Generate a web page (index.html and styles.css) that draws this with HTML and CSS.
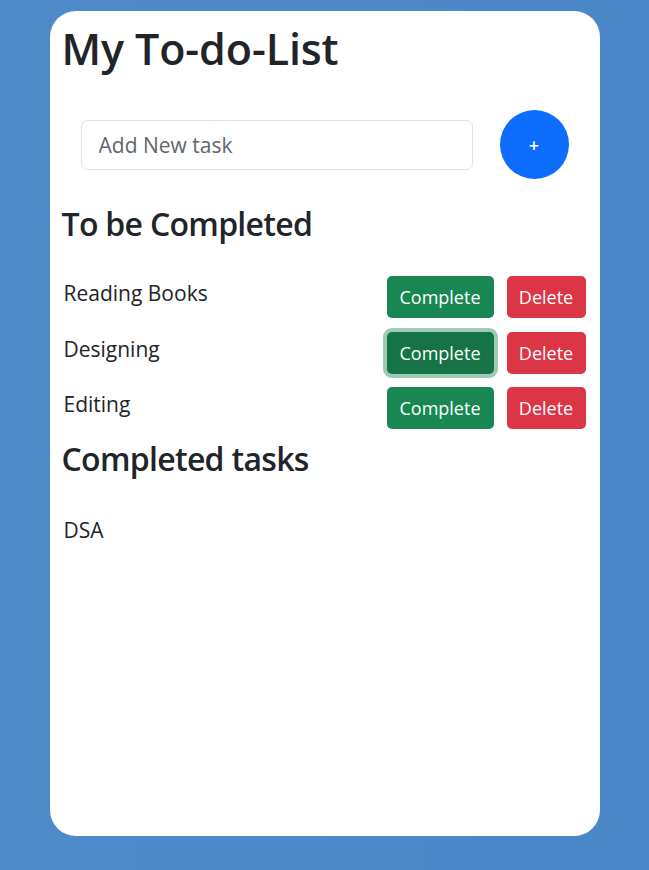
FILE: index.html
```html
<!DOCTYPE html>
<html lang="en">
<head>
<meta charset="utf-8">
<title>My To-do-List</title>
<link rel="stylesheet" href="styles.css">
</head>
<body>
<main class="card">
  <h1 class="title">My To-do-List</h1>
  <div class="add-row">
    <input class="task-input" type="text" placeholder="Add New task">
    <button class="add-btn" type="button">+</button>
  </div>
  <h2 class="section-title">To be Completed</h2>
  <ul class="task-list">
    <li class="task">
      <span class="task-name">Reading Books</span>
      <div class="actions">
        <button class="btn btn-complete" type="button">Complete</button>
        <button class="btn btn-delete" type="button">Delete</button>
      </div>
    </li>
    <li class="task">
      <span class="task-name">Designing</span>
      <div class="actions">
        <button class="btn btn-complete is-focused" type="button">Complete</button>
        <button class="btn btn-delete" type="button">Delete</button>
      </div>
    </li>
    <li class="task">
      <span class="task-name">Editing</span>
      <div class="actions">
        <button class="btn btn-complete" type="button">Complete</button>
        <button class="btn btn-delete" type="button">Delete</button>
      </div>
    </li>
  </ul>
  <h2 class="section-title section-done">Completed tasks</h2>
  <ul class="task-list done-list">
    <li class="task">
      <span class="task-name">DSA</span>
    </li>
  </ul>
</main>
</body>
</html>
```

FILE: styles.css
```css
* { box-sizing: border-box; }

html, body {
  margin: 0;
  padding: 0;
}

body {
  background: linear-gradient(90deg, #4f8bca 0%, #4b87c8 100%);
  min-height: 870px;
  font-family: "Open Sans", "Noto Sans", sans-serif;
  color: #212529;
  padding-top: 11px;
}

.card {
  width: 550px;
  height: 825px;
  margin: 0 auto;
  background: #fff;
  border-radius: 26px;
  padding: 11.5px 12px 10px;
}

.title {
  margin: 0;
  font-size: 43px;
  font-weight: 600;
  letter-spacing: -0.1px;
  line-height: 1.2;
}

.add-row {
  display: flex;
  align-items: center;
  gap: 27px;
  margin: 36px -12px 0;
  padding: 0 31px;
}

.task-input {
  flex: 1;
  height: 50px;
  border: 1px solid #dee2e6;
  border-radius: 7px;
  padding: 0 17px;
  font-family: inherit;
  font-size: 21px;
  color: #212529;
  outline: none;
}

.task-input::placeholder {
  color: #60666d;
}

.add-btn {
  width: 69px;
  height: 69px;
  border: none;
  border-radius: 50%;
  background: #0d6efd;
  color: #fff;
  font-family: inherit;
  font-size: 18px;
  font-weight: 600;
  padding: 0;
}

.section-title {
  margin: 26px 0 0;
  font-size: 32px;
  font-weight: 600;
  letter-spacing: -0.7px;
  line-height: 1.2;
}

.section-done {
  margin-top: 11px;
}

.task-list {
  list-style: none;
  margin: 32.6px 0 0;
  padding: 0 2px 0 2px;
}

.done-list {
  margin-top: 34.5px;
}

.task {
  display: flex;
  justify-content: space-between;
  align-items: flex-start;
  height: 42px;
  margin-bottom: 13.5px;
}

.task:last-child {
  margin-bottom: 0;
}

.task-name {
  font-size: 21px;
  line-height: 24px;
  padding-top: 5px;
}

.actions {
  display: flex;
  gap: 13px;
}

.btn {
  height: 42px;
  border: 1px solid transparent;
  border-radius: 5px;
  color: #fff;
  font-family: inherit;
  font-size: 18px;
  line-height: 1;
  padding: 0;
}

.btn-complete {
  width: 107px;
  background: #198754;
}

.btn-complete.is-focused {
  background: #157347;
  box-shadow: 0 0 0 4px rgba(60, 153, 110, 0.5);
}

.btn-delete {
  width: 79px;
  background: #dc3545;
}
```
